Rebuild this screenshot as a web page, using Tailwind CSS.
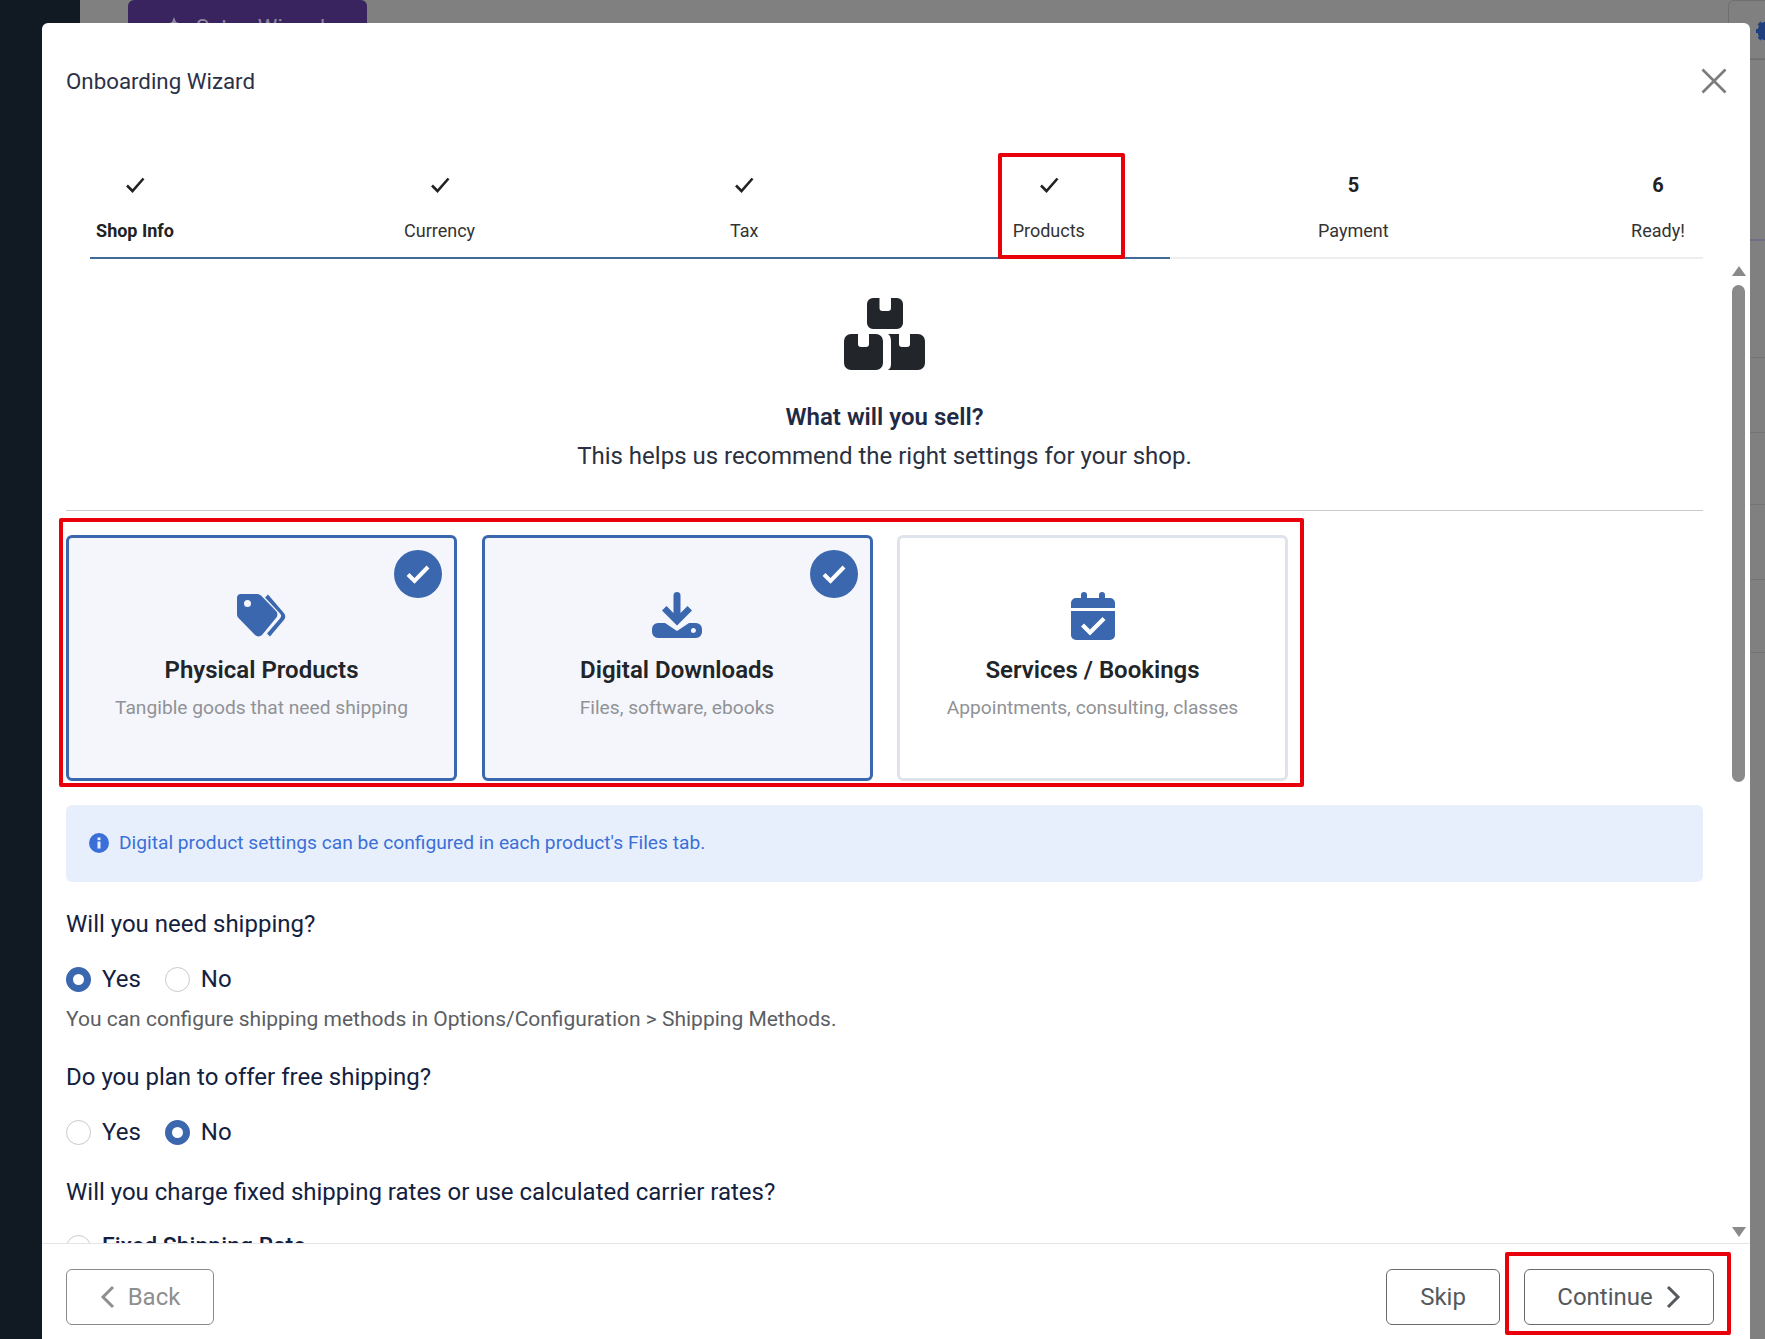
<!DOCTYPE html>
<html lang="en">

<head>
    <meta charset="UTF-8">
    <meta name="viewport" content="width=device-width, initial-scale=1.0">
    <script src="https://cdn.jsdelivr.net/npm/@tailwindcss/browser@4"></script>
    <title>Onboarding Wizard</title>
</head>

<body class="font-['Roboto',sans-serif]">
    <!-- dimmed page behind the dialog -->
    <div class="relative h-[1339px] w-[1765px] overflow-hidden bg-[#808080]">
        <div class="absolute left-0 top-0 h-full w-[80px] bg-[#111922]"></div>
        <div class="absolute left-[128px] top-0 flex h-[54px] w-[239px] items-center gap-[14px] rounded-md bg-[#39245f] pl-[30px] text-[22px] text-[#8f88a0]">
            <svg width="24" height="24" viewBox="0 0 24 24" fill="#8f88a0"><path d="M16 2l2 5 5 2-5 2-2 5-2-5-5-2 5-2zM6 14l1 3 3 1-3 1-1 3-1-3-3-1 3-1z"/></svg>
            Setup Wizard
        </div>
        <div class="absolute left-[1728px] top-0 h-[60px] w-[40px] rounded-tl-md border border-[#6f6f6f]"></div>
        <svg class="absolute left-[1755px] top-[19px]" width="24" height="24" viewBox="0 0 24 24" fill="none" stroke="#1f3f7f"><circle cx="12" cy="12" r="7" stroke-width="5"/><path stroke-width="4" d="M12 1v22M1 12h22M4 4l16 16M20 4 4 20"/></svg>
        <div class="absolute left-[1750px] top-[58px] h-px w-[15px] bg-[#737373]"></div>
        <div class="absolute left-[1750px] top-[239px] h-[2px] w-[15px] bg-[#6f6c86]"></div>
        <div class="absolute left-[1750px] top-[357px] h-px w-[15px] bg-[#747474]"></div>
        <div class="absolute left-[1750px] top-[432px] h-px w-[15px] bg-[#747474]"></div>
        <div class="absolute left-[1750px] top-[504px] h-px w-[15px] bg-[#747474]"></div>
        <div class="absolute left-[1750px] top-[579px] h-px w-[15px] bg-[#747474]"></div>
        <div class="absolute left-[1750px] top-[652px] h-px w-[15px] bg-[#747474]"></div>

        <!-- dialog -->
        <div class="absolute left-[42px] top-[23px] flex h-[1316px] w-[1708px] flex-col rounded-t-md bg-white">
            <header class="flex h-[116px] shrink-0 items-start justify-between pl-[24px] pr-[23px] pt-[43px]">
                <h1 class="text-[22.3px] leading-[30px] text-[#2c3148]">Onboarding Wizard</h1>
                <svg class="mt-[2px]" width="26" height="26" viewBox="0 0 26 26" fill="none" stroke="#7c7c7c" stroke-width="2.700"><path d="M1.500 1.500 24.500 24.500M24.500 1.500 1.500 24.500"/></svg>
            </header>

            <!-- steps -->
            <nav class="relative ml-[48px] mr-[47px] flex h-[120px] shrink-0 justify-between border-b-2 border-[#eceef0]">
                <div class="absolute bottom-[-2px] left-0 h-[2px] w-[1080px] bg-[#3f6b96]"></div>
                <div class="flex w-[90px] flex-col items-center pt-[35px] text-[#222]">
                    <svg width="20" height="22" viewBox="0 0 20 22" fill="none" stroke="#222" stroke-width="2.600"><path d="M2 11.500 7.500 17 18.500 4.500"/></svg>
                    <span class="mt-[23px] text-[18px] font-bold leading-[24px]">Shop Info</span>
                </div>
                <div class="flex w-[90px] flex-col items-center pt-[35px] text-[#333]">
                    <svg width="20" height="22" viewBox="0 0 20 22" fill="none" stroke="#222" stroke-width="2.600"><path d="M2 11.500 7.500 17 18.500 4.500"/></svg>
                    <span class="mt-[23px] text-[18px] leading-[24px]">Currency</span>
                </div>
                <div class="flex w-[90px] flex-col items-center pt-[35px] text-[#333]">
                    <svg width="20" height="22" viewBox="0 0 20 22" fill="none" stroke="#222" stroke-width="2.600"><path d="M2 11.500 7.500 17 18.500 4.500"/></svg>
                    <span class="mt-[23px] text-[18px] leading-[24px]">Tax</span>
                </div>
                <div class="flex w-[90px] flex-col items-center pt-[35px] text-[#333]">
                    <svg width="20" height="22" viewBox="0 0 20 22" fill="none" stroke="#222" stroke-width="2.600"><path d="M2 11.500 7.500 17 18.500 4.500"/></svg>
                    <span class="mt-[23px] text-[18px] leading-[24px]">Products</span>
                </div>
                <div class="flex w-[90px] flex-col items-center pt-[35px] text-[#333]">
                    <span class="h-[22px] text-[20px] font-bold leading-[22px] text-[#222]">5</span>
                    <span class="mt-[23px] text-[18px] leading-[24px]">Payment</span>
                </div>
                <div class="flex w-[90px] flex-col items-center pt-[35px] text-[#333]">
                    <span class="h-[22px] text-[20px] font-bold leading-[22px] text-[#222]">6</span>
                    <span class="mt-[23px] text-[18px] leading-[24px]">Ready!</span>
                </div>
            </nav>

            <!-- scrolling body -->
            <main class="relative h-[984px] shrink-0 overflow-hidden pl-[24px] pr-[47px]">
                <div class="flex flex-col items-center pt-[39px]">
                    <svg width="81" height="73" viewBox="0 0 81 73" fill="#22262b">
                        <path d="M29 0h6.500v10a3 3 0 0 0 3 3h5.500a3 3 0 0 0 3-3V0h6a6 6 0 0 1 6 6v19a6 6 0 0 1-6 6H29a6 6 0 0 1-6-6V6a6 6 0 0 1 6-6z"/>
                        <path d="M7 36h7v10a3 3 0 0 0 3 3h5a3 3 0 0 0 3-3V36h7a7 7 0 0 1 7 7v22a7 7 0 0 1-7 7H7a7 7 0 0 1-7-7V43a7 7 0 0 1 7-7z"/>
                        <path d="M44 36h11v10a3 3 0 0 0 3 3h5a3 3 0 0 0 3-3V36h8a7 7 0 0 1 7 7v22a7 7 0 0 1-7 7H44c2-1 3-3 3-6V43c0-3-1-6-3-7z"/>
                    </svg>
                    <h2 class="mt-[31px] text-[24px] font-semibold leading-[30px] text-[#1f2a44]">What will you sell?</h2>
                    <p class="mt-[8px] text-[24px] leading-[32px] text-[#2b3040]">This helps us recommend the right settings for your shop.</p>
                </div>
                <hr class="mt-[38px] border-[#c9cccf]">

                <!-- product type cards -->
                <div class="mt-[24px] flex gap-[24.5px]">
                    <div class="relative flex h-[246px] w-[391px] flex-col items-center rounded-md border-[3px] border-[#3b67ae] bg-[#f4f6fb] pt-[55px]">
                        <span class="absolute right-[12px] top-[12px] flex h-[48px] w-[48px] items-center justify-center rounded-full bg-[#3b67ae]">
                            <svg width="24" height="20" viewBox="0 0 24 20" fill="none" stroke="#fff" stroke-width="4"><path d="M2 10.500 8.500 17 22 3"/></svg>
                        </span>
                        <svg width="50" height="46" viewBox="0 0 50 46" fill="#3b67ae">
                            <path fill-rule="evenodd" d="M4 1h16a5 5 0 0 1 4 1.500L39 18a5 5 0 0 1 0 7L25 42a5 5 0 0 1-7 0L2 25.500A5 5 0 0 1 0 22V5a4 4 0 0 1 4-4zM10.500 7a3.500 3.500 0 1 0 0 7 3.500 3.500 0 0 0 0-7z"/>
                            <path d="M31 1.500 46 19c3 3 3 6 0 9L33 43.500l-3-3L43 25.500c1.500-2 1.500-3.500 0-5L28 4.500z"/>
                        </svg>
                        <h3 class="mt-[15px] text-[24px] font-semibold leading-[32px] text-[#212529]">Physical Products</h3>
                        <p class="mt-[8px] text-[19.200px] leading-[28px] text-[#909296]">Tangible goods that need shipping</p>
                    </div>
                    <div class="relative flex h-[246px] w-[391px] flex-col items-center rounded-md border-[3px] border-[#3b67ae] bg-[#f4f6fb] pt-[54px]">
                        <span class="absolute right-[12px] top-[12px] flex h-[48px] w-[48px] items-center justify-center rounded-full bg-[#3b67ae]">
                            <svg width="24" height="20" viewBox="0 0 24 20" fill="none" stroke="#fff" stroke-width="4"><path d="M2 10.500 8.500 17 22 3"/></svg>
                        </span>
                        <svg width="50" height="46" viewBox="0 0 50 46" fill="#3b67ae">
                            <path d="M25 0a3.500 3.500 0 0 1 3.500 3.500v17.500l7-7 4.500 4.500L25 33.500 10 18.500l4.500-4.500 7 7V3.500A3.500 3.500 0 0 1 25 0z"/>
                            <path fill-rule="evenodd" d="M6 31h7l12 8 12-8h7a6 6 0 0 1 6 6v3a6 6 0 0 1-6 6H6a6 6 0 0 1-6-6v-3a6 6 0 0 1 6-6zM41.500 36a2.500 2.500 0 1 0 0 5 2.500 2.500 0 0 0 0-5z"/>
                        </svg>
                        <h3 class="mt-[16px] text-[24px] font-semibold leading-[32px] text-[#212529]">Digital Downloads</h3>
                        <p class="mt-[8px] text-[19.200px] leading-[28px] text-[#909296]">Files, software, ebooks</p>
                    </div>
                    <div class="relative flex h-[246px] w-[391px] flex-col items-center rounded-md border-[3px] border-[#dfe3ec] bg-white pt-[54px]">
                        <svg width="44" height="48" viewBox="0 0 44 48" fill="#3b67ae">
                            <path d="M10 3a3 3 0 0 1 6 0v3h12V3a3 3 0 0 1 6 0v3h5a5 5 0 0 1 5 5v5H0v-5a5 5 0 0 1 5-5h5z"/>
                            <path fill-rule="evenodd" d="M0 19h44v24a5 5 0 0 1-5 5H5a5 5 0 0 1-5-5zM31.500 25 19 37.500 13 31.500l-3 3 9 9 15.500-15.500z"/>
                        </svg>
                        <h3 class="mt-[14px] text-[24px] font-semibold leading-[32px] text-[#212529]">Services / Bookings</h3>
                        <p class="mt-[8px] text-[19.200px] leading-[28px] text-[#909296]">Appointments, consulting, classes</p>
                    </div>
                </div>

                <!-- info note -->
                <div class="mt-[24px] flex h-[77px] items-center gap-[10px] rounded-md bg-[#e8effc] px-[23px] pb-[1px] text-[#3b6fd8]">
                    <svg width="20" height="20" viewBox="0 0 20 20"><circle cx="10" cy="10" r="10" fill="#3b6fd8"/><rect x="8.500" y="8.500" width="3" height="7" fill="#e8effc"/><rect x="8.500" y="4.500" width="3" height="2.600" fill="#e8effc"/></svg>
                    <span class="text-[19.200px] leading-[28px]">Digital product settings can be configured in each product's Files tab.</span>
                </div>

                <!-- shipping questions -->
                <p class="mt-[26px] text-[24px] leading-[32px] text-[#13213f]">Will you need shipping?</p>
                <div class="mt-[24px] flex h-[30px] items-center text-[24px] text-[#13213f]">
                    <span class="h-[25px] w-[25px] rounded-full border-[7px] border-[#3b67ae] bg-white"></span>
                    <span class="ml-[11px]">Yes</span>
                    <span class="ml-[24px] h-[25px] w-[25px] rounded-full border border-[#c8cacd] bg-white"></span>
                    <span class="ml-[11px]">No</span>
                </div>
                <p class="mt-[9px] text-[21px] leading-[32px] text-[#5b5e63]">You can configure shipping methods in Options/Configuration &gt; Shipping Methods.</p>
                <p class="mt-[26px] text-[24px] leading-[32px] text-[#13213f]">Do you plan to offer free shipping?</p>
                <div class="mt-[24px] flex h-[30px] items-center text-[24px] text-[#13213f]">
                    <span class="h-[25px] w-[25px] rounded-full border border-[#c8cacd] bg-white"></span>
                    <span class="ml-[11px]">Yes</span>
                    <span class="ml-[24px] h-[25px] w-[25px] rounded-full border-[7px] border-[#3b67ae] bg-white"></span>
                    <span class="ml-[11px]">No</span>
                </div>
                <p class="mt-[29px] text-[24px] leading-[32px] text-[#13213f]">Will you charge fixed shipping rates or use calculated carrier rates?</p>
                <div class="mt-[24px] flex h-[30px] items-center text-[23px] font-medium text-[#13213f]">
                    <span class="h-[25px] w-[25px] rounded-full border border-[#c8cacd] bg-white"></span>
                    <span class="ml-[11px]">Fixed Shipping Rate</span>
                </div>

                <!-- scrollbar -->
                <div class="absolute right-[5px] top-0 flex h-full w-[13px] flex-col items-center pt-[7px]">
                    <span class="h-0 w-0 border-x-[7.500px] border-b-[10px] border-x-transparent border-b-[#8a8a8a]"></span>
                    <span class="mt-[9px] h-[497px] w-[13px] rounded-full bg-[#8a8a8a]"></span>
                    <span class="mt-auto mb-[6px] h-0 w-0 border-x-[7.500px] border-t-[10px] border-x-transparent border-t-[#8a8a8a]"></span>
                </div>
            </main>

            <!-- footer buttons -->
            <footer class="flex h-[96px] shrink-0 items-start justify-between border-t border-[#e3e5e8] pl-[24px] pr-[36px] pt-[25px]">
                <button class="flex h-[56px] w-[148px] items-center justify-center gap-[13px] rounded-md border border-[#8a8a8a] text-[24px] text-[#8f8f8f]">
                    <svg width="15" height="24" viewBox="0 0 15 24" fill="none" stroke="#8f8f8f" stroke-width="3"><path d="M13 2 3 12l10 10"/></svg>
                    Back
                </button>
                <div class="flex gap-[24px]">
                    <button class="h-[56px] w-[114px] rounded-md border border-[#6a6a6a] text-[24px] text-[#55585c]">Skip</button>
                    <button class="flex h-[56px] w-[190px] items-center justify-center gap-[13px] rounded-md border border-[#6a6a6a] text-[24px] text-[#55585c]">
                        Continue
                        <svg width="15" height="24" viewBox="0 0 15 24" fill="none" stroke="#55585c" stroke-width="3"><path d="M2 2l10 10L2 22"/></svg>
                    </button>
                </div>
            </footer>
        </div>

        <!-- red callouts drawn over the screenshot -->
        <div class="absolute left-[998px] top-[153px] h-[106px] w-[127px] rounded-[2px] border-[4px] border-[#e8000b]"></div>
        <div class="absolute left-[59px] top-[518px] h-[269px] w-[1245px] rounded-[2px] border-[4px] border-[#e8000b]"></div>
        <div class="absolute left-[1505px] top-[1252px] h-[83px] w-[226px] rounded-[2px] border-[4px] border-[#e8000b]"></div>
    </div>
</body>

</html>
